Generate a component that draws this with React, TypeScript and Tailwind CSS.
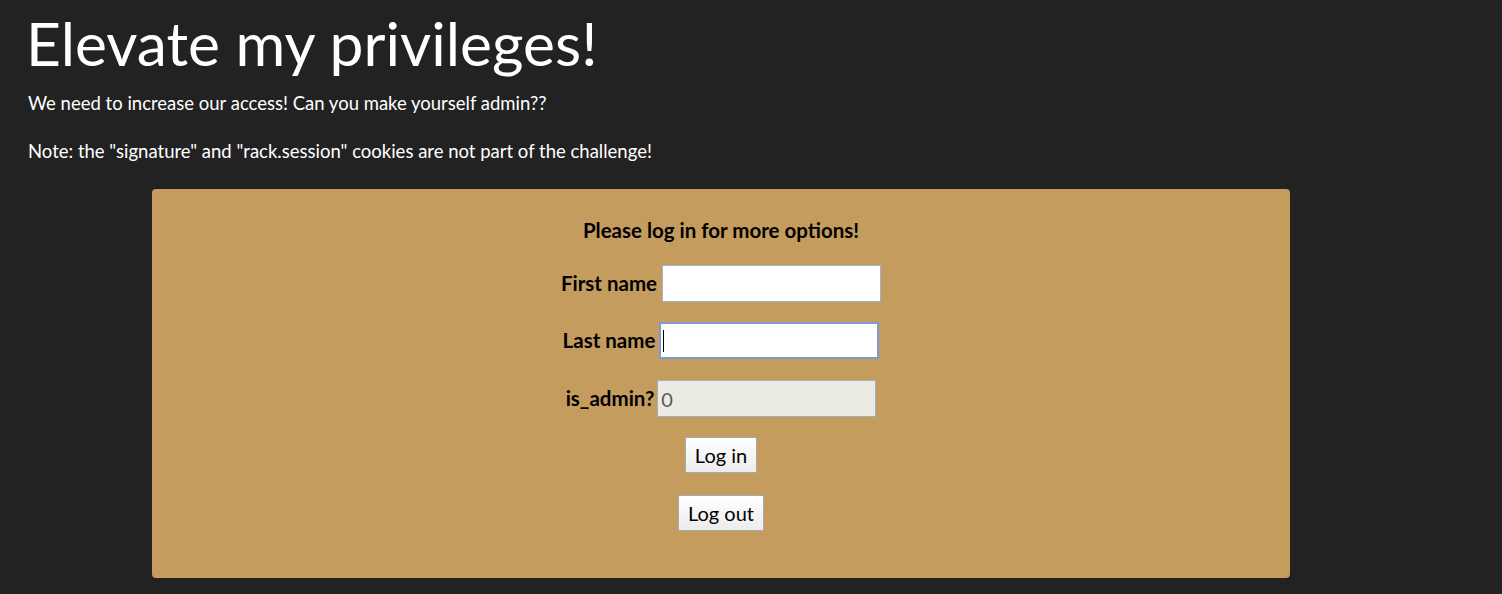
export default function App() {
  return (
    <div className="min-h-screen bg-[#222222] text-white font-['Lato',sans-serif] pt-[6px] pb-[16px]">
      <div className="pl-[26px]">
        <h1 className="text-[60.5px] leading-[74px] font-normal">Elevate my privileges!</h1>
        <p className="pl-[2px] text-[18.5px] leading-[22px] mt-[12px]">We need to increase our access! Can you make yourself admin??</p>
        <p className="pl-[2px] text-[18.5px] leading-[22px] mt-[26px]">
          Note: the "signature" and "rack.session" cookies are not part of the challenge!
        </p>
      </div>
      <div className="ml-[152px] mt-[27px] w-[1138px] h-[389px] rounded-[4px] bg-[#c49c5e] text-black flex flex-col items-center pt-[28px]">
        <p className="text-[20.5px] leading-[26px] font-bold">Please log in for more options!</p>
        <div className="mt-[22px] flex items-center gap-[5px]">
          <span className="text-[20.5px] font-bold">First name</span>
          <input className="w-[219px] h-[37px] border border-[#9fb1cf] bg-white px-[3px] text-[20px] outline-none" />
        </div>
        <div className="mt-[20px] flex items-center gap-[4px]">
          <span className="text-[20.5px] font-bold">Last name</span>
          <div className="w-[220px] h-[37px] border-2 border-[#7b9ad6] bg-white flex items-center pl-[2px] rounded-[1px]">
            <span className="w-[1px] h-[22px] bg-black" />
          </div>
        </div>
        <div className="mt-[21px] flex items-center gap-[3px]">
          <span className="text-[20.5px] font-bold">is_admin?</span>
          <div className="w-[219px] h-[37px] border border-[#a3adbd] bg-[#ebebe4] flex items-center px-[3px] text-[20px] text-[#555a66]">
            0
          </div>
        </div>
        <button className="mt-[20px] h-[36px] px-[9px] border border-[#a6a9b0] bg-gradient-to-b from-white to-[#ececec] text-[20px] leading-none">
          Log in
        </button>
        <button className="mt-[22px] h-[36px] px-[9px] border border-[#a6a9b0] bg-gradient-to-b from-white to-[#ececec] text-[20px] leading-none">
          Log out
        </button>
      </div>
    </div>
  );
}
